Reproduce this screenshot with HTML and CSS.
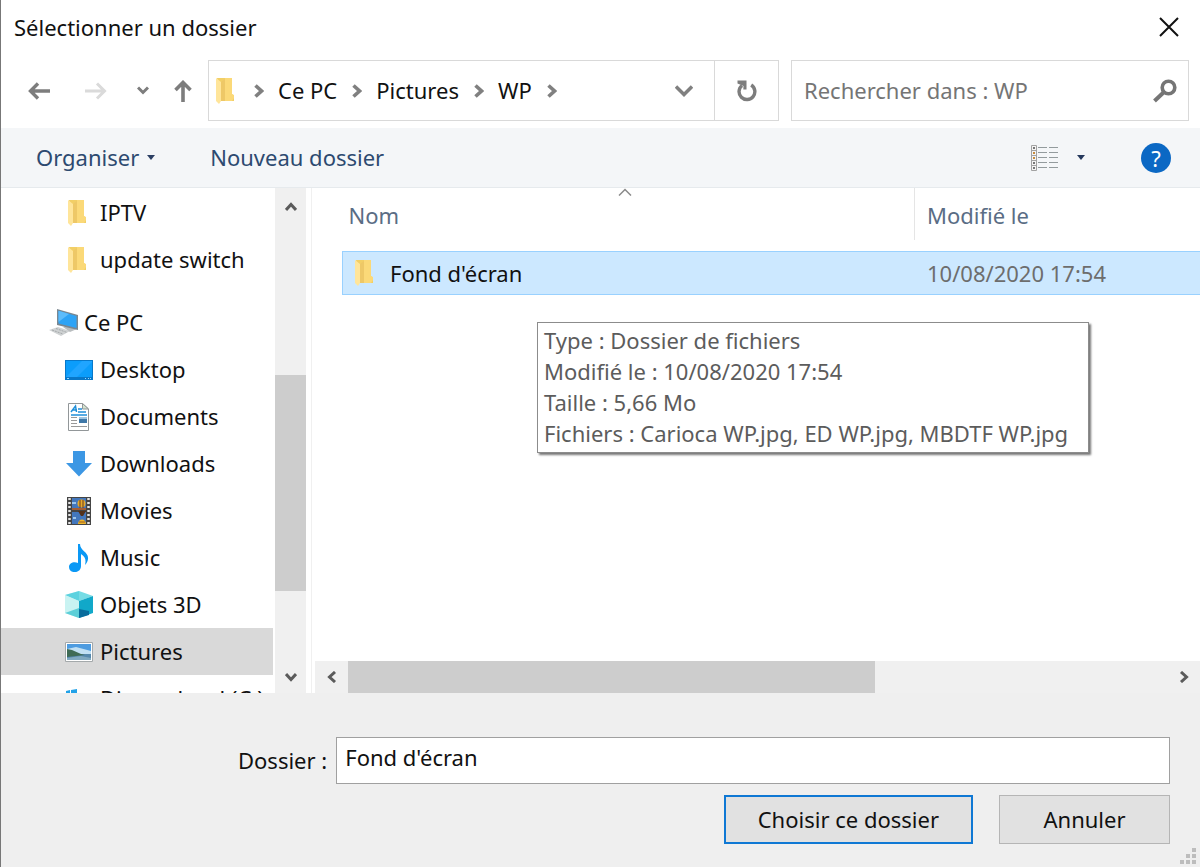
FILE: index.html
```html
<!DOCTYPE html>
<html lang="fr">
<head>
<meta charset="utf-8">
<meta name="viewport" content="width=device-width, initial-scale=1">
<title>Sélectionner un dossier</title>
<link rel="stylesheet" href="styles.css">
</head>
<body>
<svg class="defs" width="0" height="0" aria-hidden="true">
  <symbol id="folder" viewBox="0 0 18 26">
    <path fill="#f2cf66" d="M1 0h15v16l2 2v5H5z"/>
    <path fill="#fbd978" d="M9 0h7v16l2 1v3l-2 3H9z"/>
    <path fill="#eec867" d="M5 4l4-3v22H5z"/>
    <path fill="#ffe59a" d="M0 0l5 4v19l-2 3-3-3z"/>
  </symbol>
  <symbol id="crumb" viewBox="0 0 10 14"><path fill="none" stroke="#808080" stroke-width="3.600" d="M1.500 1.500L7.500 7l-6 5.500"/></symbol>
</svg>
<main class="dialog">
  <header class="titlebar">
    <h1 class="title">Sélectionner un dossier</h1>
    <button class="icon-btn close" aria-label="Fermer">
      <svg width="20" height="20" viewBox="0 0 20 20"><path fill="none" stroke="#111" stroke-width="2" d="M1 1l18 18M19 1L1 19"/></svg>
    </button>
  </header>

  <nav class="navbar" aria-label="Navigation">
    <div class="history">
      <button class="icon-btn" aria-label="Précédent"><svg width="22" height="18" viewBox="0 0 22 18"><path fill="none" stroke="#7d7d7d" stroke-width="3.400" d="M22 9H2M10 1.500L2.500 9l7.500 7.500"/></svg></button>
      <button class="icon-btn forward" aria-label="Suivant" disabled><svg width="22" height="18" viewBox="0 0 22 18"><path fill="none" stroke="#dadada" stroke-width="3" d="M0 9h20M12 1.500L19.500 9 12 16.500"/></svg></button>
      <button class="icon-btn" aria-label="Emplacements récents"><svg width="12" height="9" viewBox="0 0 12 9"><path fill="none" stroke="#7d7d7d" stroke-width="3" d="M1 1.500l5 5 5-5"/></svg></button>
      <button class="icon-btn up" aria-label="Dossier parent"><svg width="18" height="22" viewBox="0 0 18 22"><path fill="none" stroke="#7d7d7d" stroke-width="3.600" d="M9 22V2M1.500 10L9 2.500l7.500 7.500"/></svg></button>
    </div>
    <div class="address">
      <svg class="address-folder" width="18" height="26"><use href="#folder"/></svg>
      <svg class="sep" width="10" height="14"><use href="#crumb"/></svg>
      <a class="crumb" href="#">Ce PC</a>
      <svg class="sep" width="10" height="14"><use href="#crumb"/></svg>
      <a class="crumb" href="#">Pictures</a>
      <svg class="sep" width="10" height="14"><use href="#crumb"/></svg>
      <a class="crumb" href="#">WP</a>
      <svg class="sep" width="10" height="14"><use href="#crumb"/></svg>
      <button class="icon-btn dropdown" aria-label="Adresses précédentes"><svg width="18" height="12" viewBox="0 0 18 12"><path fill="none" stroke="#808080" stroke-width="3.400" d="M1 1.500l8 8 8-8"/></svg></button>
      <button class="icon-btn refresh" aria-label="Actualiser"><svg width="20" height="22" viewBox="0 0 20 22"><path fill="none" stroke="#7d7d7d" stroke-width="3.400" d="M14.200 5A7.900 7.900 0 1 1 5 5.500"/><path fill="#7d7d7d" d="M.5.500h9V9.500H6.300L6.500 6 .5 3.500z"/></svg></button>
    </div>
    <div class="search">
      <input class="search-input" type="search" placeholder="Rechercher dans : WP" aria-label="Rechercher dans : WP">
      <svg width="24" height="24" viewBox="0 0 24 24"><circle cx="15.500" cy="8.500" r="6.300" fill="none" stroke="#757575" stroke-width="3.600"/><path stroke="#757575" stroke-width="4" d="M11 13l-9.500 9"/></svg>
    </div>
  </nav>

  <div class="toolbar">
    <button class="tool">Organiser <svg width="8" height="5" viewBox="0 0 8 5"><path fill="#2b3f63" d="M0 0h8L4 5z"/></svg></button>
    <button class="tool">Nouveau dossier</button>
    <div class="tool-end">
      <button class="icon-btn view" aria-label="Changer l'affichage">
        <svg width="28" height="26" viewBox="0 0 28 26">
          <path fill="#f4f4f4" stroke="#a2a2a2" d="M.5.5h5v25h-5zM.5 5.500h5M.5 10.500h5M.5 15.500h5M.5 20.500h5"/>
          <path fill="#777" d="M2 2h2v2H2zM2 17h2v2H2zM2 22h2v2H2z"/><path fill="#c58a3c" d="M2 7h2v2H2zM2 12h2v2H2z"/>
          <path stroke="#939b9d" d="M7 2.500h9M7 7.500h9M7 12.500h9M7 17.500h9M7 22.500h9M18 2.500h9M18 7.500h9M18 12.500h9M18 17.500h9M18 22.500h9"/>
        </svg>
      </button>
      <button class="icon-btn more" aria-label="Autres options"><svg width="8" height="5" viewBox="0 0 8 5"><path fill="#25385c" d="M0 0h8L4 5z"/></svg></button>
      <button class="help" aria-label="Aide">?</button>
    </div>
  </div>

  <div class="panes">
    <aside class="sidebar">
      <ul class="tree">
        <li><a class="node" href="#"><svg class="node-folder" width="18" height="26"><use href="#folder"/></svg>IPTV</a></li>
        <li><a class="node" href="#"><svg class="node-folder" width="18" height="26"><use href="#folder"/></svg>update switch</a></li>
        <li class="group"><a class="node root" href="#"><svg width="30" height="28" viewBox="0 0 30 28">
          <path fill="#cfd2d3" d="M0 21l9-3 12 4-9 5z"/><path stroke="#a5a9ab" stroke-dasharray="2 1" d="M3 21l11 4M7 19.500l11 4"/>
          <path fill="#b9bdbf" d="M14 18l6-1 8 3-7 3z"/>
          <path fill="#7b8790" d="M8 0l21 6v15L8 16z"/><path fill="#2ea3f5" d="M9.500 1.800L27.500 7v12L9.500 14.500z"/><path fill="#5dbcfb" d="M9.500 1.800L20 5 9.500 13z"/></svg>Ce PC</a></li>
        <li><a class="node" href="#"><svg width="28" height="28" viewBox="0 0 28 28"><path fill="#0878c9" d="M0 4h28v20H0z"/><path fill="#0b9dfb" d="M1 5h26v16H1z"/><path fill="#20a5ff" d="M1 21L17 5h10v1L12 21z"/><path fill="#9bd5fa" d="M2 22h2v1H2zM20 22h1v1h-1zM23 22h1v1h-1zM25 22h1v1h-1z"/></svg>Desktop</a></li>
        <li><a class="node" href="#"><svg width="28" height="28" viewBox="0 0 28 28"><path fill="#fff" stroke="#929799" d="M3.500.5h14l6 5.500v21.500h-20z"/><path fill="#d4e4cf" stroke="#929799" d="M17.500.5V6h6z"/><path fill="none" stroke="#1f8fd9" stroke-width="1.500" d="M6 9l4.500-6 1 6M8 7h4M13 6h4M13 9h8M6 12h16"/><path fill="#3f78a8" d="M14 14h8v6h-8z"/><path fill="#9dc4e0" d="M14 14h8v2h-8z"/><path stroke="#999" d="M6 14.500h6M6 17.500h6M6 20.500h6M6 23.500h16"/></svg>Documents</a></li>
        <li><a class="node" href="#"><svg width="28" height="28" viewBox="0 0 28 28"><path fill="#3c97e4" d="M8 1h12v12h7L14 26.500 1 13h7z"/></svg>Downloads</a></li>
        <li><a class="node" href="#"><svg width="28" height="28" viewBox="0 0 28 28"><path fill="#454545" d="M2 0h24v28H2z"/><path stroke="#e4e4e4" stroke-width="2.500" stroke-dasharray="2 2" d="M4.500 1v26M23.500 1v26"/><path fill="#4377bd" d="M7 1h14v12H7zM7 15h14v12H7z"/><path fill="#9cc5ec" d="M7 5h4v2H7zM8 20h3v2H8z"/><circle cx="16.500" cy="6.500" r="4" fill="#e6aa2b"/><path stroke="#683b22" d="M15 3v8M18 3v8"/><path fill="#a45e34" d="M7 11h14v2H7z"/><path fill="#54321b" d="M13 14h8l-3 5h-2z"/><path fill="#efb528" d="M13 27c0-6 8-6 8 0z"/><path stroke="#9a5a27" d="M14 25h6"/></svg>Movies</a></li>
        <li><a class="node" href="#"><svg width="28" height="28" viewBox="0 0 28 28"><path fill="#0a98f5" d="M13 0h2c0 7 9 8 8 15-.3 2-1 4-3 6 1-4 1-8-4-11v12c0 8-12 8-12 1 0-4 5-6 9-4z"/></svg>Music</a></li>
        <li><a class="node" href="#"><svg width="28" height="28" viewBox="0 0 28 28"><path fill="#75dce5" d="M14 0l14 5-14 5L0 4z"/><path fill="#c9f3f2" d="M0 4l14 6v17L0 22z"/><path fill="#11a8c9" d="M14 10l14-5v17l-14 5z"/><path fill="#5dcfd8" d="M0 22l14-5v10z"/><path fill="#086c9c" d="M14 18l10 2v4l-10 3z"/><path fill="#37c3d8" d="M0 4L14 0v10z" opacity=".4"/></svg>Objets 3D</a></li>
        <li><a class="node selected" href="#" aria-current="true"><svg width="28" height="28" viewBox="0 0 28 28"><path fill="#fff" stroke="#a4a9ab" d="M.5 4.500h27v19H.5z"/><path fill="#4e9ce0" d="M2 6h24v9H2z"/><path fill="#c1e0f3" d="M2 11l9-2 15 4v3H2z"/><path fill="#5688ac" d="M2 16h24v6H2z"/><path fill="#3f6b55" d="M2 11l5 1 9 4 4 1-18 2z"/><path fill="#80a9c0" d="M2 20l14-2 10 2v2H2z"/></svg>Pictures</a></li>
        <li><a class="node" href="#"><svg width="28" height="28" viewBox="0 0 28 28"><path fill="#22a2e8" d="M1 6l4-1v3l-4 1zM6 5l6-1v4H6z"/><path fill="#b8bcbe" d="M1 12h26v10H1z"/></svg>Disque local (C:)</a></li>
      </ul>
      <div class="scroll scroll-v">
        <button class="icon-btn scroll-btn" aria-label="Défiler vers le haut"><svg width="12" height="10" viewBox="0 0 12 10"><path fill="none" stroke="#5b5b5b" stroke-width="3" d="M1 8l5-5.500L11 8"/></svg></button>
        <div class="before"></div><div class="thumb"></div><div class="after"></div>
        <button class="icon-btn scroll-btn" aria-label="Défiler vers le bas"><svg width="12" height="10" viewBox="0 0 12 10"><path fill="none" stroke="#5b5b5b" stroke-width="3" d="M1 2l5 5.500L11 2"/></svg></button>
      </div>
    </aside>

    <section class="content">
      <div class="list">
        <table class="files">
          <thead>
            <tr>
              <th class="col-name" scope="col">Nom
                <svg class="sort" width="14" height="8" viewBox="0 0 14 8"><path fill="none" stroke="#8a8a8a" stroke-width="1.500" d="M1 7.500l6-6 6 6"/></svg>
              </th>
              <th class="col-date" scope="col"><span class="col-label">Modifié le</span></th>
            </tr>
          </thead>
          <tbody>
            <tr class="row">
              <td class="cell-name"><span class="file"><svg width="18" height="26"><use href="#folder"/></svg>Fond d'écran</span></td>
              <td class="cell-date">10/08/2020 17:54</td>
            </tr>
          </tbody>
        </table>
        <div class="tooltip" role="tooltip">
          <div>Type : Dossier de fichiers</div>
          <div>Modifié le : 10/08/2020 17:54</div>
          <div>Taille : 5,66 Mo</div>
          <div>Fichiers : Carioca WP.jpg, ED WP.jpg, MBDTF WP.jpg</div>
        </div>
      </div>
      <div class="scroll scroll-h">
        <button class="icon-btn scroll-btn" aria-label="Défiler vers la gauche"><svg width="10" height="12" viewBox="0 0 10 12"><path fill="none" stroke="#5b5b5b" stroke-width="3" d="M8 1L2.500 6 8 11"/></svg></button>
        <div class="thumb"></div><div class="after"></div>
        <button class="icon-btn scroll-btn" aria-label="Défiler vers la droite"><svg width="10" height="12" viewBox="0 0 10 12"><path fill="none" stroke="#5b5b5b" stroke-width="3" d="M2 1l5.500 5L2 11"/></svg></button>
      </div>
    </section>
  </div>

  <form class="footer">
    <div class="field">
      <label for="folder-name">Dossier :</label>
      <input class="folder-input" id="folder-name" type="text" value="Fond d'écran">
    </div>
    <div class="actions">
      <button class="btn primary" type="button">Choisir ce dossier</button>
      <button class="btn" type="button">Annuler</button>
    </div>
    <svg class="grip" width="16" height="16" viewBox="0 0 16 16"><path fill="#bdbdbd" d="M12 0h4v4h-4zM6 6h4v4H6zM12 6h4v4h-4zM0 12h4v4H0zM6 12h4v4H6zM12 12h4v4h-4z"/></svg>
  </form>
</main>
</body>
</html>
```
FILE: styles.css
```css
* { box-sizing: border-box; }

body {
  margin: 0;
  font-family: "Noto Sans", "Open Sans", sans-serif;
  font-size: 22px;
  line-height: 31px;
  color: #111;
}

button, input { font: inherit; color: inherit; }
button { padding: 0; border: 0; background: none; }
a { color: inherit; text-decoration: none; }
svg { flex: none; display: block; }
.defs { position: absolute; }

.icon-btn { display: flex; align-items: center; justify-content: center; }

.dialog {
  display: flex;
  flex-direction: column;
  height: 100vh;
  border-left: 1px solid #777;
  background: #fff;
}

/* Title bar */
.titlebar {
  display: flex;
  align-items: flex-start;
  justify-content: space-between;
  padding: 12px 21px 17px 13px;
}
.title { margin: 0; font-size: 22px; font-weight: 400; }
.close { padding-top: 5px; }

/* Navigation */
.navbar { display: flex; padding: 0 11px 7px 27px; }
.history { display: flex; align-items: center; gap: 30px; flex: none; width: 180px; }
.forward { margin-left: 5px; }
.history .up { margin-left: -5px; }

.address {
  display: flex;
  align-items: center;
  flex: 571 1 571px;
  height: 61px;
  padding-left: 7px;
  border: 1px solid #d9d9d9;
}
.address-folder { margin-right: 10px; }
.sep { margin: 0 11px 0 10px; }
.crumb { padding: 0 5px 0 3px; white-space: nowrap; }
.dropdown { width: 60px; margin-left: auto; }
.refresh { align-self: stretch; width: 64px; border-left: 1px solid #d9d9d9; }

.search {
  display: flex;
  align-items: center;
  flex: 398 1 398px;
  height: 61px;
  margin-left: 12px;
  padding: 0 11px 0 12px;
  border: 1px solid #d9d9d9;
}
.search-input {
  flex: 1;
  min-width: 0;
  padding: 0;
  border: 0;
  outline: 0;
  background: none;
}
.search-input::placeholder { color: #757575; opacity: 1; }

/* Toolbar */
.toolbar {
  display: flex;
  align-items: center;
  gap: 55px;
  flex: none;
  height: 60px;
  padding: 0 29px 0 35px;
  border-bottom: 1px solid #e6eaed;
  background: #f4f6f8;
  color: #2d4a70;
}
.tool { display: flex; align-items: center; gap: 8px; }
.tool-end { display: flex; align-items: center; margin-left: auto; }
.more { margin: 0 56px 0 18px; }
.help {
  width: 30px;
  height: 30px;
  border-radius: 50%;
  background: #0b68c4;
  color: #fff;
  line-height: 30px;
}

/* Panes */
.panes { display: flex; flex: 1; min-height: 0; }

.sidebar {
  display: flex;
  flex: none;
  width: 311px;
  padding-right: 5px;
  border-right: 1px solid #f0f0f0;
  overflow: hidden;
}
.tree {
  flex: 1;
  margin: 0;
  padding: 1px 0 0;
  list-style: none;
  overflow: hidden;
}
.group { margin-top: 16px; }
.node {
  display: flex;
  align-items: center;
  gap: 7px;
  height: 47px;
  margin-right: 2px;
  padding-left: 64px;
  white-space: nowrap;
}
.node-folder { margin: 0 7px 0 3px; }
.root { gap: 5px; padding-left: 48px; }
.selected { background: #d9d9d9; }

/* Scroll bars */
.scroll { display: flex; flex: none; background: #f0f0f0; }
.scroll-v { flex-direction: column; width: 31px; }
.scroll-h { height: 32px; }
.scroll-v .scroll-btn { height: 38px; }
.scroll-v .scroll-btn:last-child { height: 32px; }
.scroll-h .scroll-btn { width: 33px; }
.thumb { background: #cdcdcd; }
.scroll-v .before { flex: 149; }
.scroll-v .thumb { flex: 216; }
.scroll-v .after { flex: 70; }
.scroll-h .thumb { flex: 527; }
.scroll-h .after { flex: 292; }

/* File list */
.content {
  display: flex;
  flex-direction: column;
  flex: 1;
  min-width: 0;
  padding-left: 3px;
}
.list { position: relative; flex: 1; min-height: 0; padding-left: 27px; }
.files { width: 100%; border-collapse: collapse; table-layout: fixed; }
.files th {
  position: relative;
  height: 63px;
  padding: 0 0 8px 6px;
  color: #5a6d85;
  font-weight: 400;
  text-align: left;
}
.files .col-date { width: 286px; padding: 0 0 11px; vertical-align: top; }
.col-label {
  display: block;
  padding: 12px 0 9px 12px;
  border-left: 1px solid #e5e5e5;
}
.sort { position: absolute; top: 0; left: 275px; }
.row {
  height: 43px;
  border: 1px solid #99d1ff;
  border-right: 0;
  background: #cce8ff;
}
.row td { padding: 0 0 0 12px; }
.file { display: flex; align-items: center; gap: 17px; }
.row .cell-date { padding-left: 13px; color: #6d6d6d; }

.tooltip {
  position: absolute;
  top: 134px;
  left: 222px;
  min-width: 552px;
  padding: 2px 6px 3px;
  border: 1px solid #8c8c8c;
  background: #fff;
  box-shadow: 2px 2px 2px #777;
  color: #5c5c5c;
  white-space: nowrap;
}

/* Footer */
.footer {
  position: relative;
  flex: none;
  padding: 44px 30px 23px 237px;
  background: #efefef;
}
.field { display: flex; align-items: center; gap: 9px; }
.folder-input {
  flex: 1;
  min-width: 0;
  height: 47px;
  padding: 0 8px 7px;
  border: 1px solid #a0a0a0;
  background: #fff;
}
.actions { display: flex; justify-content: flex-end; gap: 26px; margin-top: 11px; }
.btn {
  min-width: 171px;
  height: 49px;
  padding: 0 32px;
  border: 1px solid #b5b5b5;
  background: #e1e1e1;
}
.primary { border: 2px solid #0f78d4; }
.grip { position: absolute; right: 4px; bottom: 3px; }
```
